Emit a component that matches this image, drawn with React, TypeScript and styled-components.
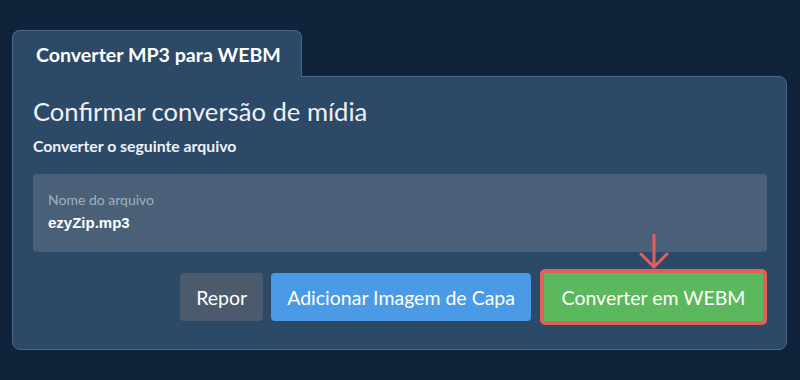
import * as React from 'react'
import styled, { createGlobalStyle } from 'styled-components'

const GlobalStyle = createGlobalStyle`
  html, body {
    margin: 0;
    padding: 0;
    background: #11233a;
  }
  body {
    font-family: Lato, 'Open Sans', sans-serif;
    color: #ecf0f4;
  }
`

const Page = styled.div`
  width: 800px;
  height: 380px;
  box-sizing: border-box;
  padding: 30px 13px 0 12px;
`

const Tab = styled.div`
  position: relative;
  z-index: 1;
  width: 290px;
  height: 47px;
  box-sizing: border-box;
  margin-bottom: -1px;
  padding: 12px 0 0 23px;
  background: #2d4968;
  border: 1px solid #4c6789;
  border-bottom: none;
  border-radius: 8px 8px 0 0;
  font-size: 19.6px;
  font-weight: 700;
  color: #ffffff;
`

const Panel = styled.div`
  box-sizing: border-box;
  background: #2d4968;
  border: 1px solid #4c6789;
  border-radius: 0 8px 8px 8px;
  padding: 19px 19px 24px 20px;
`

const Heading = styled.h2`
  margin: 0;
  font-size: 25.6px;
  font-weight: 400;
  line-height: 31px;
  color: #eef1f5;
`

const Subtitle = styled.p`
  margin: 9px 0 0;
  font-size: 15.8px;
  font-weight: 700;
  line-height: 20px;
  color: #eef1f5;
`

const Field = styled.div`
  margin-top: 18px;
  height: 78px;
  box-sizing: border-box;
  padding: 16px 15px 0;
  background: #4a5f78;
  border-radius: 4px;
`

const FieldLabel = styled.div`
  font-size: 14px;
  line-height: 19px;
  color: #a4afbd;
`

const FieldValue = styled.div`
  margin-top: 5px;
  font-family: 'Liberation Sans', Arial, sans-serif;
  font-size: 15px;
  font-weight: 700;
  line-height: 18px;
  color: #ffffff;
`

const Actions = styled.div`
  display: flex;
  justify-content: flex-end;
  align-items: center;
  gap: 8px;
  margin-top: 17px;
`

const Button = styled.button<{ $tone: 'gray' | 'blue' | 'green' }>`
  position: relative;
  height: 48px;
  box-sizing: border-box;
  padding: 0 16px;
  border: none;
  border-radius: 4px;
  font-family: Lato, 'Open Sans', sans-serif;
  font-size: 19.5px;
  color: #ffffff;
  white-space: nowrap;
  background: ${p => (p.$tone === 'gray' ? '#4b5b6d' : p.$tone === 'blue' ? '#4a9ae6' : '#5cb85c')};
`

const Highlight = styled.div`
  position: relative;
  margin-left: 1px;
  border: 4px solid #e0605c;
  border-radius: 5px;
  display: flex;

  ${Button} {
    height: 48px;
    width: 219px;
    padding: 0;
    border-radius: 1px;
  }
`

const Arrow = styled.svg`
  position: absolute;
  left: 50%;
  top: -39px;
  transform: translateX(-50%);
`

export default function App() {
  return (
    <>
      <GlobalStyle />
      <Page>
        <Tab>Converter MP3 para WEBM</Tab>
        <Panel>
          <Heading>Confirmar conversão de mídia</Heading>
          <Subtitle>Converter o seguinte arquivo</Subtitle>
          <Field>
            <FieldLabel>Nome do arquivo</FieldLabel>
            <FieldValue>ezyZip.mp3</FieldValue>
          </Field>
          <Actions>
            <Button $tone="gray">Repor</Button>
            <Button $tone="blue">Adicionar Imagem de Capa</Button>
            <Highlight>
              <Button $tone="green">Converter em WEBM</Button>
              <Arrow width="30" height="36" viewBox="0 0 30 36">
                <path
                  d="M15 1 V33 M2 20 L15 33 L28 20"
                  fill="none"
                  stroke="#e0605c"
                  strokeWidth="3"
                  strokeLinecap="round"
                  strokeLinejoin="round"
                />
              </Arrow>
            </Highlight>
          </Actions>
        </Panel>
      </Page>
    </>
  )
}
